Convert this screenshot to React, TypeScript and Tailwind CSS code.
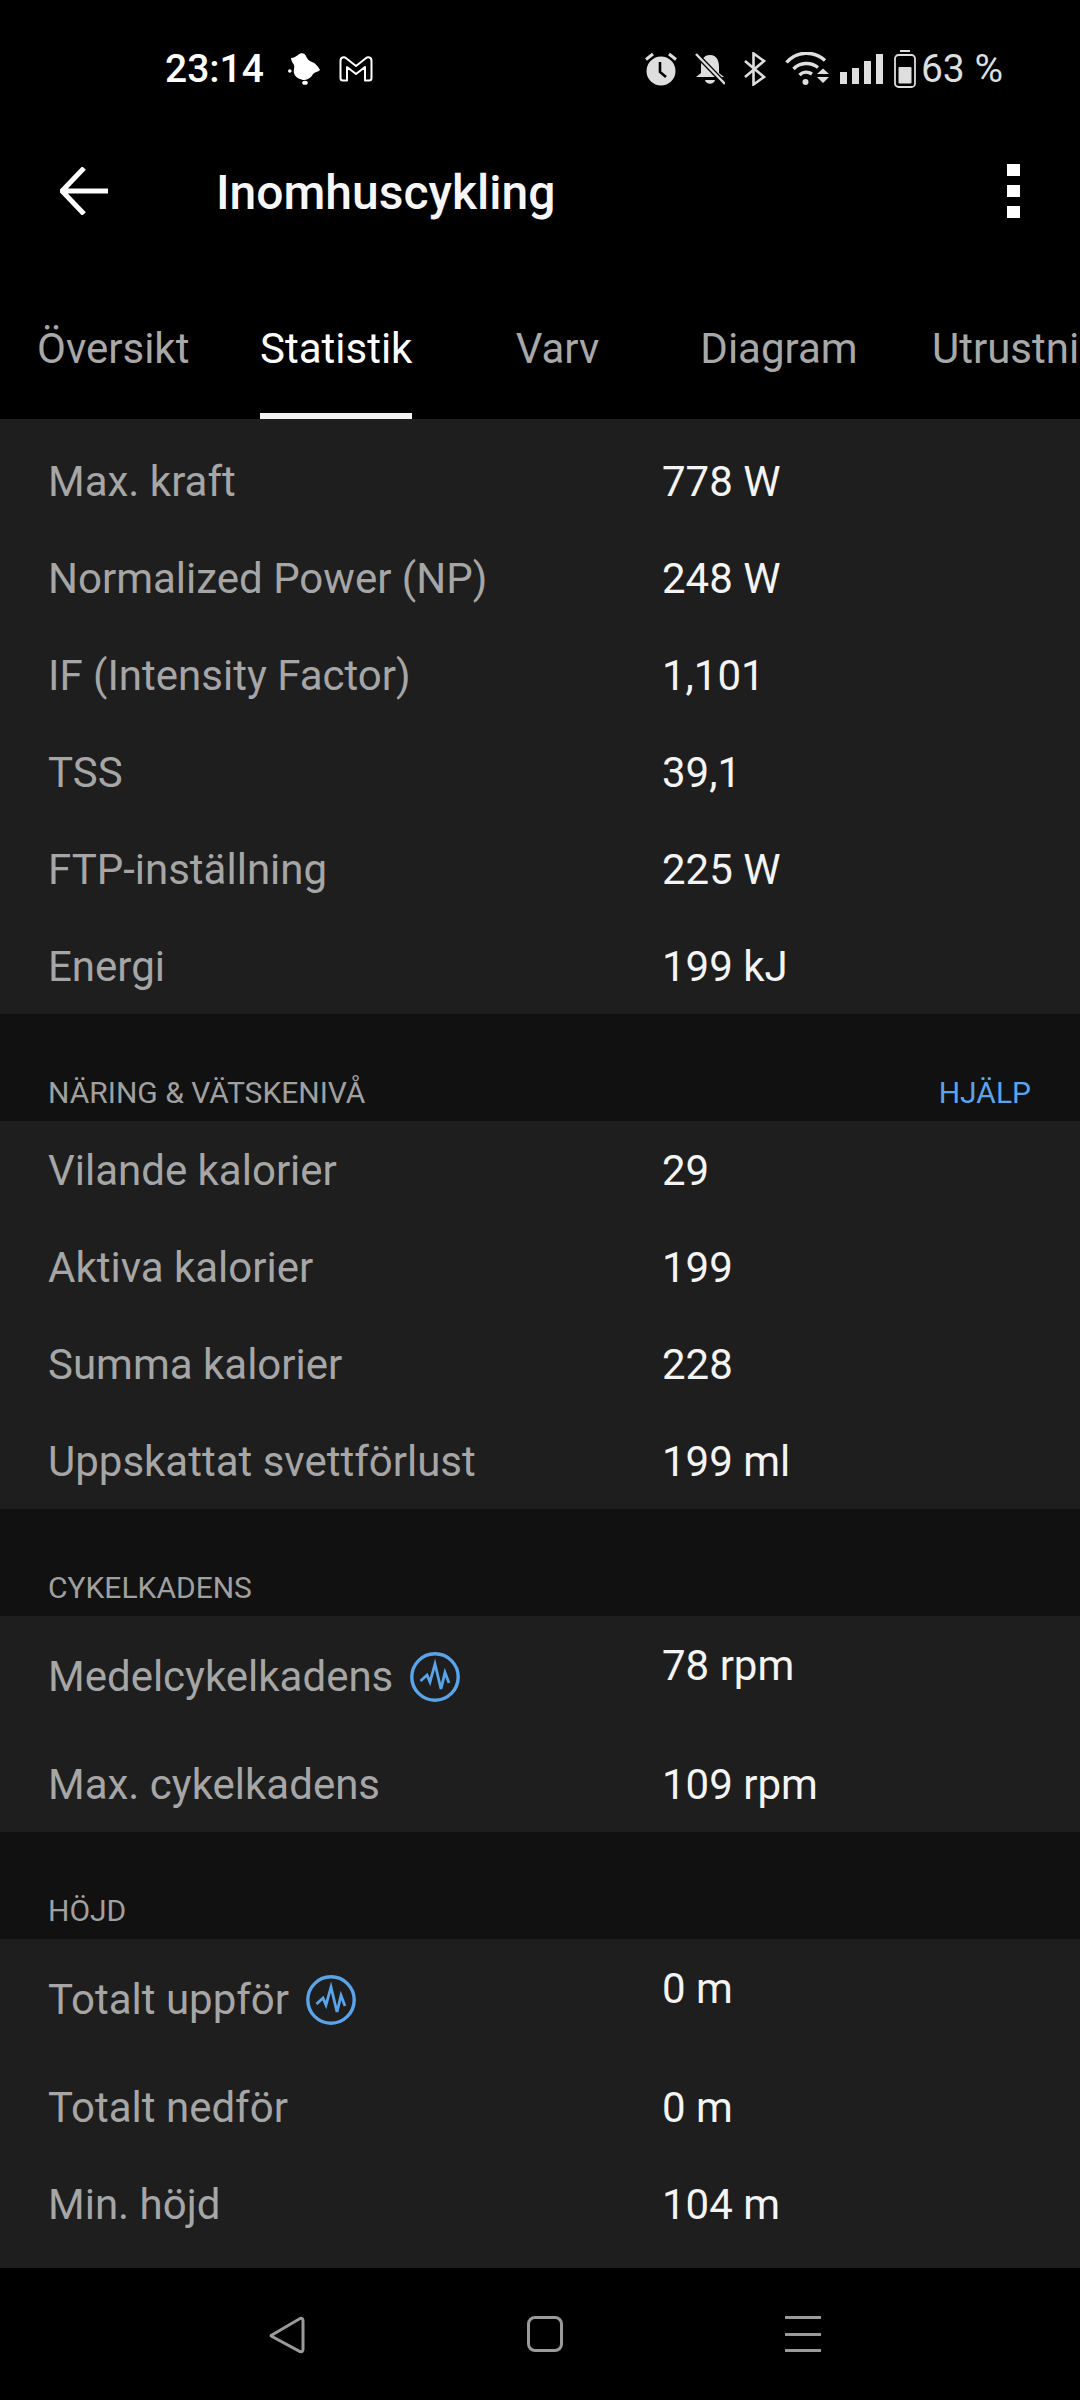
const font = { fontFamily: "Roboto, sans-serif" };

const PulseIcon = () => (
  <svg width="50" height="50" viewBox="0 0 50 50" fill="none" className="shrink-0">
    <circle cx="25" cy="25" r="23.2" stroke="#5aa5ea" strokeWidth="3.4" />
    <path
      d="M10.5 29 L17 23 L20 30 L25 12 L31 37 L35 20.5 L39 31"
      stroke="#5aa5ea"
      strokeWidth="2.8"
      strokeLinejoin="miter"
    />
  </svg>
);

const Row = ({ label, value }: { label: string; value: string }) => (
  <div className="flex h-[97px] items-center pl-12 pt-[2px]">
    <div className="w-[614px] text-[42px] leading-none text-[#a6a6a6]">{label}</div>
    <div className="text-[42px] leading-none text-[#f4f4f4]">{value}</div>
  </div>
);

const ChartRow = ({ label, value }: { label: string; value: string }) => (
  <div className="flex h-[119px] pl-12">
    <div className="flex w-[614px] items-center gap-[17px] pt-[3px] text-[42px] leading-none text-[#a6a6a6]">
      {label}
      <PulseIcon />
    </div>
    <div className="pt-[29px] text-[42px] leading-none text-[#f4f4f4]">{value}</div>
  </div>
);

const SectionHead = ({ title, help }: { title: string; help?: boolean }) => (
  <div className="flex h-[107px] items-end justify-between bg-[#111111] pb-[12px] pl-12 pr-[49px] text-[30px] leading-[32px]">
    <span className="text-[#a0a0a0]">{title}</span>
    {help && <span className="text-[#5aa5ea]">HJÄLP</span>}
  </div>
);

const StatusIcons = () => (
  <div className="flex items-center">
    {/* alarm */}
    <svg width="32" height="34" viewBox="0 0 32 34" className="mr-[18px]">
      <path d="M1 7.5 L8 2 M31 7.5 L24 2" stroke="#dedede" strokeWidth="3" />
      <circle cx="16" cy="19" r="14.5" fill="#dedede" />
      <path d="M15 10 V20 L21 25" stroke="#000" strokeWidth="2.6" fill="none" />
    </svg>
    {/* bell off */}
    <svg width="30" height="32" viewBox="0 0 30 32" className="mr-[19px]">
      <path d="M15 2 C8 2 6 8 6 14 V20 L1 24 H29 L24 20 V14 C24 8 22 2 15 2Z" fill="#dedede" />
      <path d="M10 27 H20 C19 32 11 32 10 27Z" fill="#dedede" />
      <path d="M1 1 L30 31" stroke="#000" strokeWidth="5" />
      <path d="M1 1 L30 31" stroke="#dedede" strokeWidth="2.4" />
    </svg>
    {/* bluetooth */}
    <svg width="22" height="34" viewBox="0 0 22 34" fill="none" className="mr-[19px]">
      <path d="M1 9 L20 25 L9.5 32.5 V1.5 L20 9 L1 25" stroke="#dedede" strokeWidth="2.6" />
    </svg>
    {/* wifi */}
    <svg width="45" height="34" viewBox="0 0 45 34" className="mr-[10px]">
      <path d="M1.5 10.5 C12 -1.5 29 -1.5 40 8.5" stroke="#dedede" strokeWidth="3.4" fill="none" />
      <path d="M8.5 17 C15 10 26 10 33 15.5" stroke="#dedede" strokeWidth="3.4" fill="none" />
      <path d="M14.5 23 C18 19.5 23 19.5 27 22" stroke="#dedede" strokeWidth="3.4" fill="none" />
      <circle cx="20.5" cy="30" r="3" fill="#dedede" />
      <path d="M32 22 L38 16.5 L44 22Z M32 25 H44 L38 31Z" fill="#dedede" />
    </svg>
    {/* signal */}
    <div className="mr-[11px] flex h-[30px] items-end gap-[5px]">
      <div className="h-[12px] w-[7px] bg-[#dedede]" />
      <div className="h-[16px] w-[7px] bg-[#dedede]" />
      <div className="h-[23px] w-[7px] bg-[#dedede]" />
      <div className="h-[30px] w-[7px] bg-[#dedede]" />
    </div>
    {/* battery */}
    <svg width="22" height="38" viewBox="0 0 22 38" fill="none" className="mr-[5px]">
      <path d="M6 1 H16" stroke="#dedede" strokeWidth="2" />
      <rect x="1" y="5" width="20" height="32" rx="3.5" stroke="#dedede" strokeWidth="1.8" />
      <rect x="4.5" y="17" width="13" height="16.5" rx="1" fill="#dedede" />
    </svg>
    <span className="pt-[1px] text-[39px] leading-none text-[#dedede]">63 %</span>
  </div>
);

export default function App() {
  return (
    <div className="flex h-[2400px] w-[1080px] flex-col overflow-hidden bg-black" style={font}>
      {/* status bar */}
      <div className="flex h-[138px] items-center justify-between pl-[165px] pr-[77px]">
        <div className="flex items-center">
          <span className="w-[123px] text-[39px] font-medium leading-none text-white">23:14</span>
          <svg width="32" height="32" viewBox="0 0 32 32" className="mr-[19px]">
            <path
              d="M3 5 C6 5 8 3 10 2 C13 -1 17 0 18 3 C19 6 21 8 24 9 C27 10 30 13 32 17 C30 19 27 19 25 21 C23 25 19 27 15 27 C11 26 7 24 6 20 C5 17 7 15 6 12 C5 10 3 8 3 5Z"
              fill="#fff"
            />
            <circle cx="1.8" cy="18" r="1.8" fill="#fff" />
            <ellipse cx="17" cy="29.8" rx="2.8" ry="2" fill="#fff" />
          </svg>
          <svg width="34" height="26" viewBox="0 0 34 26" fill="none">
            <path
              d="M1.5 5 C1.5 1 5 0.5 7.5 2.5 L17 10 L26.5 2.5 C29 0.5 32.5 1 32.5 5 V22 C32.5 23.5 31.5 24.5 30 24.5 H26 V11 L17 18 L8 11 V24.5 H4 C2.5 24.5 1.5 23.5 1.5 22Z"
              stroke="#fff"
              strokeWidth="2"
              strokeLinejoin="round"
            />
          </svg>
        </div>
        <StatusIcons />
      </div>

      {/* title bar */}
      <div className="flex h-[106px] items-center justify-between px-[60px]">
        <div className="flex items-center">
          <svg width="48" height="48" viewBox="0 0 48 48" fill="none" className="mr-[108px]">
            <path d="M2 24 H48 M24 1 L2 24 L24 47" stroke="#fff" strokeWidth="5" />
          </svg>
          <span className="pt-[3px] text-[48px] font-medium leading-none text-[#f6f6f6]">Inomhuscykling</span>
        </div>
        <div className="flex flex-col gap-[9px]">
          <div className="h-[12px] w-[13px] bg-white" />
          <div className="h-[12px] w-[13px] bg-white" />
          <div className="h-[12px] w-[13px] bg-white" />
        </div>
      </div>

      {/* tabs */}
      <div className="flex h-[175px] items-start overflow-hidden whitespace-nowrap pt-[81px] text-[42px] leading-[48px] text-[#a8a8a8]">
        <div className="w-[224px] shrink-0 pl-[37px]">Översikt</div>
        <div className="relative w-[224px] shrink-0 pl-[36px] text-white">
          Statistik
          <div className="absolute left-[36px] top-[88px] h-[6px] w-[152px] bg-[#f2f2f2]" />
        </div>
        <div className="w-[219px] shrink-0 text-center">Varv</div>
        <div className="w-[224px] shrink-0 text-center">Diagram</div>
        <div className="shrink-0 pl-[41px]">Utrustning</div>
      </div>

      {/* stats */}
      <div className="flex-1 bg-[#1e1e1e]">
        <div className="pt-[13px]">
          <Row label="Max. kraft" value="778 W" />
          <Row label="Normalized Power (NP)" value="248 W" />
          <Row label="IF (Intensity Factor)" value="1,101" />
          <Row label="TSS" value="39,1" />
          <Row label="FTP-inställning" value="225 W" />
          <Row label="Energi" value="199 kJ" />
        </div>
        <SectionHead title="NÄRING & VÄTSKENIVÅ" help />
        <Row label="Vilande kalorier" value="29" />
        <Row label="Aktiva kalorier" value="199" />
        <Row label="Summa kalorier" value="228" />
        <Row label="Uppskattat svettförlust" value="199 ml" />
        <SectionHead title="CYKELKADENS" />
        <ChartRow label="Medelcykelkadens" value="78 rpm" />
        <Row label="Max. cykelkadens" value="109 rpm" />
        <SectionHead title="HÖJD" />
        <ChartRow label="Totalt uppför" value="0 m" />
        <Row label="Totalt nedför" value="0 m" />
        <Row label="Min. höjd" value="104 m" />
      </div>

      {/* nav bar */}
      <div className="flex h-[132px] items-start bg-black pt-[48px]">
        <svg width="36" height="38" viewBox="0 0 36 38" fill="none" className="ml-[269px]">
          <path d="M3 19 L31 2.5 Q34 1.5 34 5 V33 Q34 36.5 31 35.5 L3 20.5 Q1 19.5 3 19Z" stroke="#9a9a9a" strokeWidth="3" />
        </svg>
        <div className="ml-[222px] h-[36px] w-[36px] rounded-[8px] border-[3px] border-[#9a9a9a]" />
        <div className="ml-[222px] flex h-[36px] w-[36px] flex-col justify-between">
          <div className="h-[3px] bg-[#9a9a9a]" />
          <div className="h-[3px] bg-[#9a9a9a]" />
          <div className="h-[3px] bg-[#9a9a9a]" />
        </div>
      </div>
    </div>
  );
}
